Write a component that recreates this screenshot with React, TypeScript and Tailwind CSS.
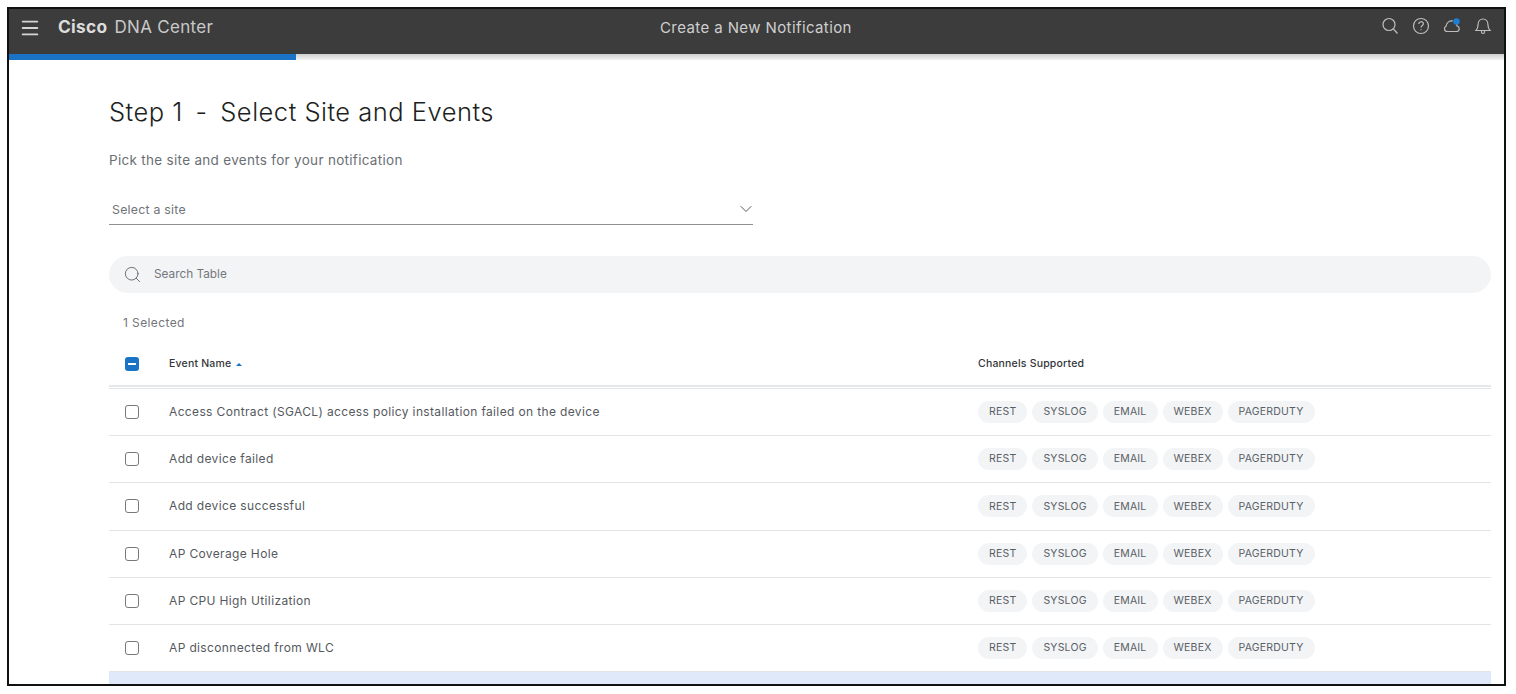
import React from 'react';
import { ChevronDown, Menu, Search } from 'lucide-react';

const events = [
  'Access Contract (SGACL) access policy installation failed on the device',
  'Add device failed',
  'Add device successful',
  'AP Coverage Hole',
  'AP CPU High Utilization',
  'AP disconnected from WLC',
];

const channels = ['REST', 'SYSLOG', 'EMAIL', 'WEBEX', 'PAGERDUTY'];

const Header: React.FC = () => (
  <div className="relative flex h-[45px] shrink-0 items-center bg-[#3c3c3c] pb-[8px] text-[#d6d6d6]">
    <Menu className="ml-[10px] size-[22px]" strokeWidth={2} />
    <div className="ml-[17px] text-[17px] tracking-[0.3px] text-[#c9c9c9]">
      <span className="mr-[2px] text-[17.300px] font-bold text-[#dcdcdc]">Cisco</span> DNA Center
    </div>
    <div className="absolute left-[651px] translate-y-[1px] text-[15px] tracking-[0.4px] text-[#cfcfcf]">Create a New Notification</div>
    <div className="ml-auto mr-[11px] flex -translate-y-[2px] items-center gap-[11px] text-[#bdbdbd]">
      <svg viewBox="0 0 20 20" className="size-[20px]" fill="none" stroke="currentColor" strokeWidth="1.2">
        <circle cx="9" cy="8.500" r="6" />
        <path d="M13.500 13l4 4.500" />
      </svg>
      <svg viewBox="0 0 20 20" className="size-[20px]" fill="none" stroke="currentColor" strokeWidth="1.2">
        <circle cx="10" cy="10" r="7.500" />
        <path d="M7.800 8c0-3 4.600-3 4.600-.2 0 1.800-2.300 1.800-2.300 3.800M10 13.200v1" />
      </svg>
      <svg viewBox="0 0 20 20" className="size-[20px]" fill="none" stroke="currentColor" strokeWidth="1.2">
        <path d="M5.500 15.500h9c3.500 0 3.500-5 .5-5.500 0-1-.3-2-1-2.500M5.500 15.500c-3.500 0-4-4-1.500-5.200C4.500 7 7 4.500 11 5" />
        <circle cx="14.500" cy="5.500" r="3.200" fill="#1b7fd4" stroke="none" />
      </svg>
      <svg viewBox="0 0 20 20" className="size-[20px]" fill="none" stroke="currentColor" strokeWidth="1.2">
        <path d="M3 14.500c1.500-1.500 2-2.500 2-5.500 0-3.500 2-6 5-6s5 2.500 5 6c0 3 .5 4 2 5.500zM8.500 14.500v1.500a1.500 1.500 0 0 0 3 0v-1.500" />
      </svg>
    </div>
  </div>
);

const Chip: React.FC<{ label: string }> = ({ label }) => (
  <span className="flex h-[22px] items-center rounded-full bg-[#f3f4f6] px-[11px] text-[10.500px] tracking-[0.2px] text-[#5a5f66]">
    {label}
  </span>
);

const Row: React.FC<{ name: string }> = ({ name }) => (
  <div className="flex h-[47.200px] shrink-0 items-center border-b border-[#e3e4e6]">
    <span className="ml-[16px] size-[14px] rounded-[3px] border border-[#77797c]" />
    <span className="ml-[30px] w-[809px] text-[12px] tracking-[0.36px] text-[#55595e]">{name}</span>
    <div className="flex gap-[5px]">
      {channels.map((c) => (
        <Chip key={c} label={c} />
      ))}
    </div>
  </div>
);

export default function App() {
  return (
    <div className="h-[694px] w-[1516px] overflow-hidden bg-white pl-[7px] pt-[7px] font-['Inter','Liberation_Sans',sans-serif]">
      <div className="flex h-[679px] w-[1499px] flex-col overflow-hidden border-2 border-[#111111] bg-white">
        <Header />

        {/* progress bar */}
        <div className="h-[6px] shrink-0 bg-gradient-to-b from-[#cfcfcf] to-[#f2f2f2]">
          <div className="h-full w-[287px] bg-[#1a73c4]" />
        </div>

        <div className="flex min-h-0 flex-1 flex-col pl-[100px] pr-[13px] [&>*]:shrink-0">
          <h1 className="mt-[36px] text-[25.500px] font-light leading-[32px] tracking-[0.5px] text-[#1d1f22]">
            Step 1<span className="mx-[5px]"> - </span>Select Site and Events
          </h1>
          <p className="mt-[23px] text-[13.500px] leading-[18px] tracking-[0.3px] text-[#6b6f74]">
            Pick the site and events for your notification
          </p>

          <div className="mt-[22px] flex h-[34px] w-[644px] items-center justify-between border-b border-[#8f9194] pl-[3px]">
            <span className="translate-y-[3px] text-[12.300px] tracking-[0.25px] text-[#6f7378]">Select a site</span>
            <ChevronDown className="-mr-[3px] size-[20px] translate-y-[1px] text-[#55585c]" strokeWidth={1.200} />
          </div>

          <div className="mt-[31px] flex h-[37px] items-center rounded-full bg-[#f3f4f6] pl-[14px]">
            <Search className="size-[19px] text-[#676a6e]" strokeWidth={1.200} />
            <span className="ml-[12px] text-[11.800px] text-[#73777c]">Search Table</span>
          </div>

          <div className="ml-[14px] mt-[22px] text-[12px] leading-[16px] tracking-[0.4px] text-[#72767a]">1 Selected</div>

          {/* table header */}
          <div className="mt-[16px] flex h-[40px] items-center border-b-2 border-[#e6e7e8] pb-[4px]">
            <span className="ml-[16px] flex size-[14px] items-center justify-center rounded-[3px] bg-[#1a73c4]">
              <span className="h-[1.500px] w-[8px] bg-white" />
            </span>
            <span className="ml-[30px] flex w-[809px] items-center gap-[5px] text-[10.500px] font-medium tracking-[0.2px] text-[#33363a]">
              Event Name
              <span className="h-0 w-0 border-x-[3.500px] border-b-[3.500px] border-x-transparent border-b-[#1a73c4]" />
            </span>
            <span className="text-[10.500px] font-medium tracking-[0.2px] text-[#33363a]">Channels Supported</span>
          </div>

          <div className="mt-[1px] flex flex-col border-t border-[#e6e7e8]">
            {events.map((e) => (
              <Row key={e} name={e} />
            ))}
            <div className="h-[20px] shrink-0 bg-[#dfe9f9]" />
          </div>
        </div>
      </div>
    </div>
  );
}
